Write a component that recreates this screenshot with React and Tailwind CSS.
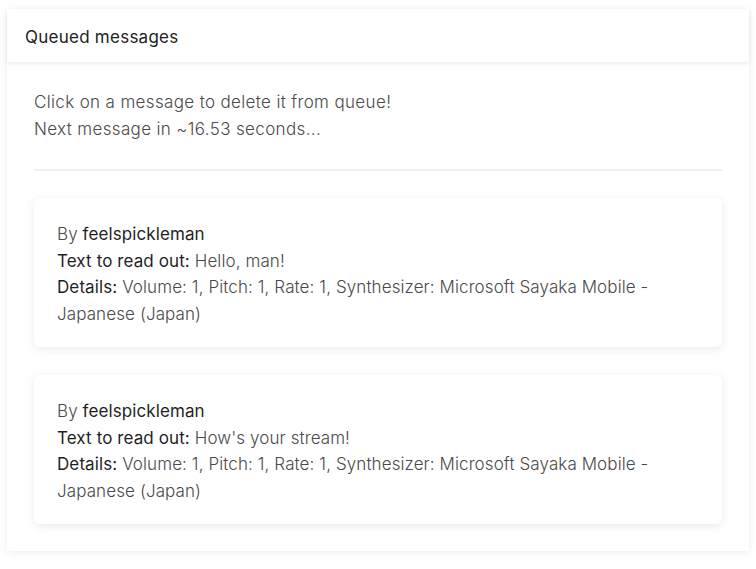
import React from "react";

function Msg({ text }) {
  return (
    <div className="rounded-[6px] bg-white px-[23px] pt-[23px] pb-[20px] shadow-[0_2px_10px_rgba(0,0,0,0.09)] text-[17px] leading-[26.5px] font-light tracking-[0.1px] text-[#4a4a4a]">
      <div>
        By <span className="font-normal text-[#1f1f1f]">feelspickleman</span>
      </div>
      <div>
        <span className="font-normal text-[#1f1f1f]">Text to read out:</span> {text}
      </div>
      <div>
        <span className="font-normal text-[#1f1f1f]">Details:</span> Volume: 1, Pitch: 1, Rate: 1, Synthesizer: Microsoft Sayaka Mobile - Japanese (Japan)
      </div>
    </div>
  );
}

export default function App() {
  return (
    <div className="min-h-[569px] w-[756px] bg-white pt-[9px] pl-[7px]" style={{ fontFamily: "Inter, 'Noto Sans', sans-serif" }}>
      <div className="w-[742px] bg-white shadow-[0_1px_8px_rgba(0,0,0,0.08)]">
        <div className="relative flex h-[53px] items-center px-[18px] pt-[4px] text-[17px] tracking-[0.25px] text-[#222] shadow-[0_2px_4px_rgba(0,0,0,0.08)]">
          Queued messages
        </div>
        <div className="px-[27px] pt-[27px] pb-[27px]">
          <div className="text-[17px] leading-[27px] font-light tracking-[0.35px] text-[#4a4a4a]">
            <div>Click on a message to delete it from queue!</div>
            <div>Next message in ~16.53 seconds...</div>
          </div>
          <div className="mt-[26px] h-[2px] bg-[#f0f0f0]" />
          <div className="mt-[27px] flex flex-col gap-[28px]">
            <Msg text="Hello, man!" />
            <Msg text="How's your stream!" />
          </div>
        </div>
      </div>
    </div>
  );
}
